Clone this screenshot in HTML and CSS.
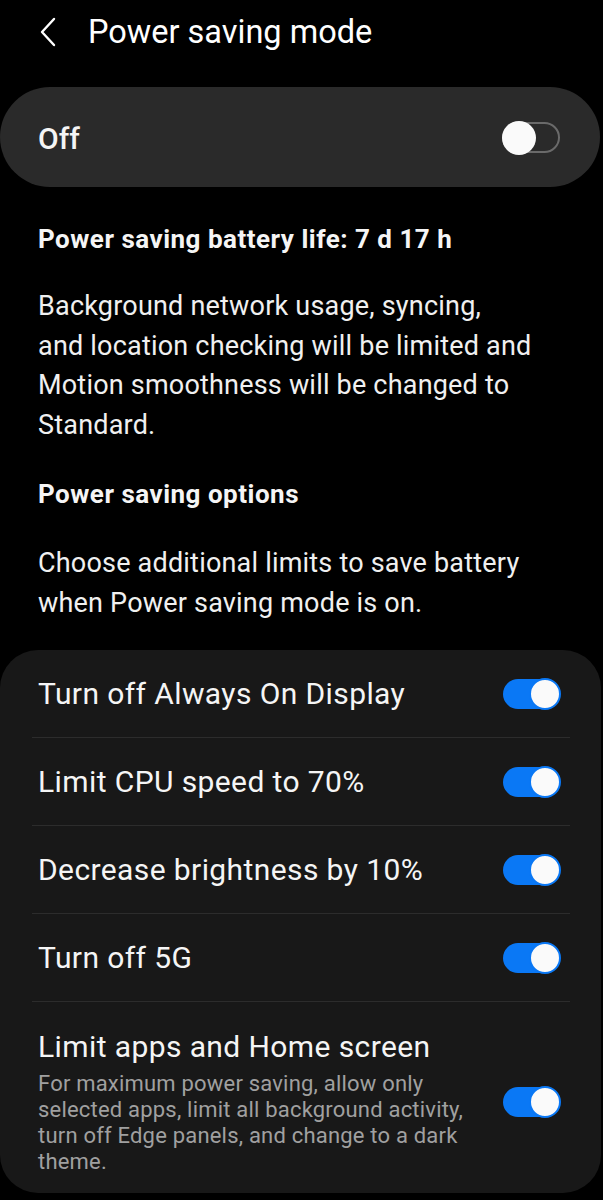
FILE: index.html
```html
<!DOCTYPE html>
<html lang="en">
<head>
    <meta charset="UTF-8">
    <meta name="viewport" content="width=device-width, initial-scale=1.0">
    <title>Power saving mode</title>
    <link rel="stylesheet" href="styles.css">
</head>
<body>
    <header class="top-bar">
        <svg class="back" width="18" height="30" viewBox="0 0 18 30">
            <path d="M15 2 L3 15 L15 28" fill="none" stroke="#ffffff" stroke-width="2.4" stroke-linecap="round" stroke-linejoin="round"/>
        </svg>
        <h1>Power saving mode</h1>
    </header>

    <div class="master">
        <span class="master-label">Off</span>
        <span class="switch"><span class="knob"></span></span>
    </div>

    <section class="info">
        <h2>Power saving battery life: 7 d 17 h</h2>
        <p>Background network usage, syncing,<br>and location checking will be limited and Motion smoothness will be changed to Standard.</p>
        <h2>Power saving options</h2>
        <p>Choose additional limits to save battery when Power saving mode is on.</p>
    </section>

    <div class="options">
        <div class="row">
            <div class="row-text"><div class="row-title">Turn off Always On Display</div></div>
            <span class="switch on"><span class="knob"></span></span>
        </div>
        <div class="row">
            <div class="row-text"><div class="row-title">Limit CPU speed to 70%</div></div>
            <span class="switch on"><span class="knob"></span></span>
        </div>
        <div class="row">
            <div class="row-text"><div class="row-title">Decrease brightness by 10%</div></div>
            <span class="switch on"><span class="knob"></span></span>
        </div>
        <div class="row">
            <div class="row-text"><div class="row-title">Turn off 5G</div></div>
            <span class="switch on"><span class="knob"></span></span>
        </div>
        <div class="row tall">
            <div class="row-text">
                <div class="row-title">Limit apps and Home screen</div>
                <div class="row-sub">For maximum power saving, allow only selected apps, limit all background activity, turn off Edge panels, and change to a dark theme.</div>
            </div>
            <span class="switch on"><span class="knob"></span></span>
        </div>
    </div>
</body>
</html>
```

FILE: styles.css
```css
body {
    margin: 0;
    background-color: #000000;
    color: #f5f5f5;
    font-family: Roboto, "Noto Sans", sans-serif;
    width: 603px;
}
.top-bar {
    display: flex;
    align-items: center;
    height: 64px;
    padding-left: 39px;
}
.back {
    display: block;
}
.top-bar h1 {
    margin: 0 0 0 31px;
    font-size: 32.5px;
    font-weight: 400;
    color: #ffffff;
}
.master {
    display: flex;
    align-items: center;
    justify-content: space-between;
    height: 100px;
    margin: 23px 3px 0 0;
    padding: 0 40px 0 38px;
    background-color: #2a2a2a;
    border-radius: 50px;
}
.master-label {
    font-size: 30px;
    font-weight: 500;
    padding-top: 2px;
}
.info {
    padding: 34px 38px 0;
}
.info h2 {
    margin: 0;
    font-size: 26px;
    font-weight: 700;
    letter-spacing: 0.5px;
    line-height: 36px;
}
.info p {
    margin: 30px 0 31px;
    font-size: 27px;
    letter-spacing: 0.2px;
    line-height: 39.5px;
    color: #f0f0f0;
}
.info h2 + p + h2 + p {
    margin-top: 32px;
    margin-bottom: 27px;
}
.options {
    margin: 0 2px 0 0;
    background-color: #181818;
    border-radius: 38px;
    padding: 0 0 18px;
}
.row {
    display: flex;
    align-items: center;
    justify-content: space-between;
    height: 88px;
    margin: 0 31px 0 32px;
    padding: 0 11px 0 6px;
    border-bottom: 1px solid #2c2c2c;
    box-sizing: border-box;
}
.row.tall {
    height: auto;
    padding-top: 27px;
    padding-bottom: 0;
    border-bottom: none;
}
.row-text {
    flex: 1;
    min-width: 0;
}
.row-title {
    font-size: 30px;
    letter-spacing: 0.4px;
    color: #f5f5f5;
}
.row-sub {
    margin-top: 7px;
    padding-right: 28px;
    font-size: 22px;
    letter-spacing: 0.2px;
    line-height: 26px;
    color: #a0a0a0;
}
.switch {
    position: relative;
    flex: none;
    width: 58px;
    height: 31px;
    border: 2px solid #6a6a6a;
    border-radius: 17px;
    box-sizing: border-box;
}
.switch .knob {
    position: absolute;
    left: -2px;
    top: -3px;
    width: 34px;
    height: 34px;
    border-radius: 50%;
    background-color: #fafafa;
}
.switch.on {
    width: 56px;
    height: 30px;
    border: none;
    background-color: #0a78f5;
}
.switch.on .knob {
    left: auto;
    right: -2px;
    top: -1px;
    width: 32px;
    height: 32px;
    box-sizing: border-box;
    border: 2px solid #0a78f5;
}
```
